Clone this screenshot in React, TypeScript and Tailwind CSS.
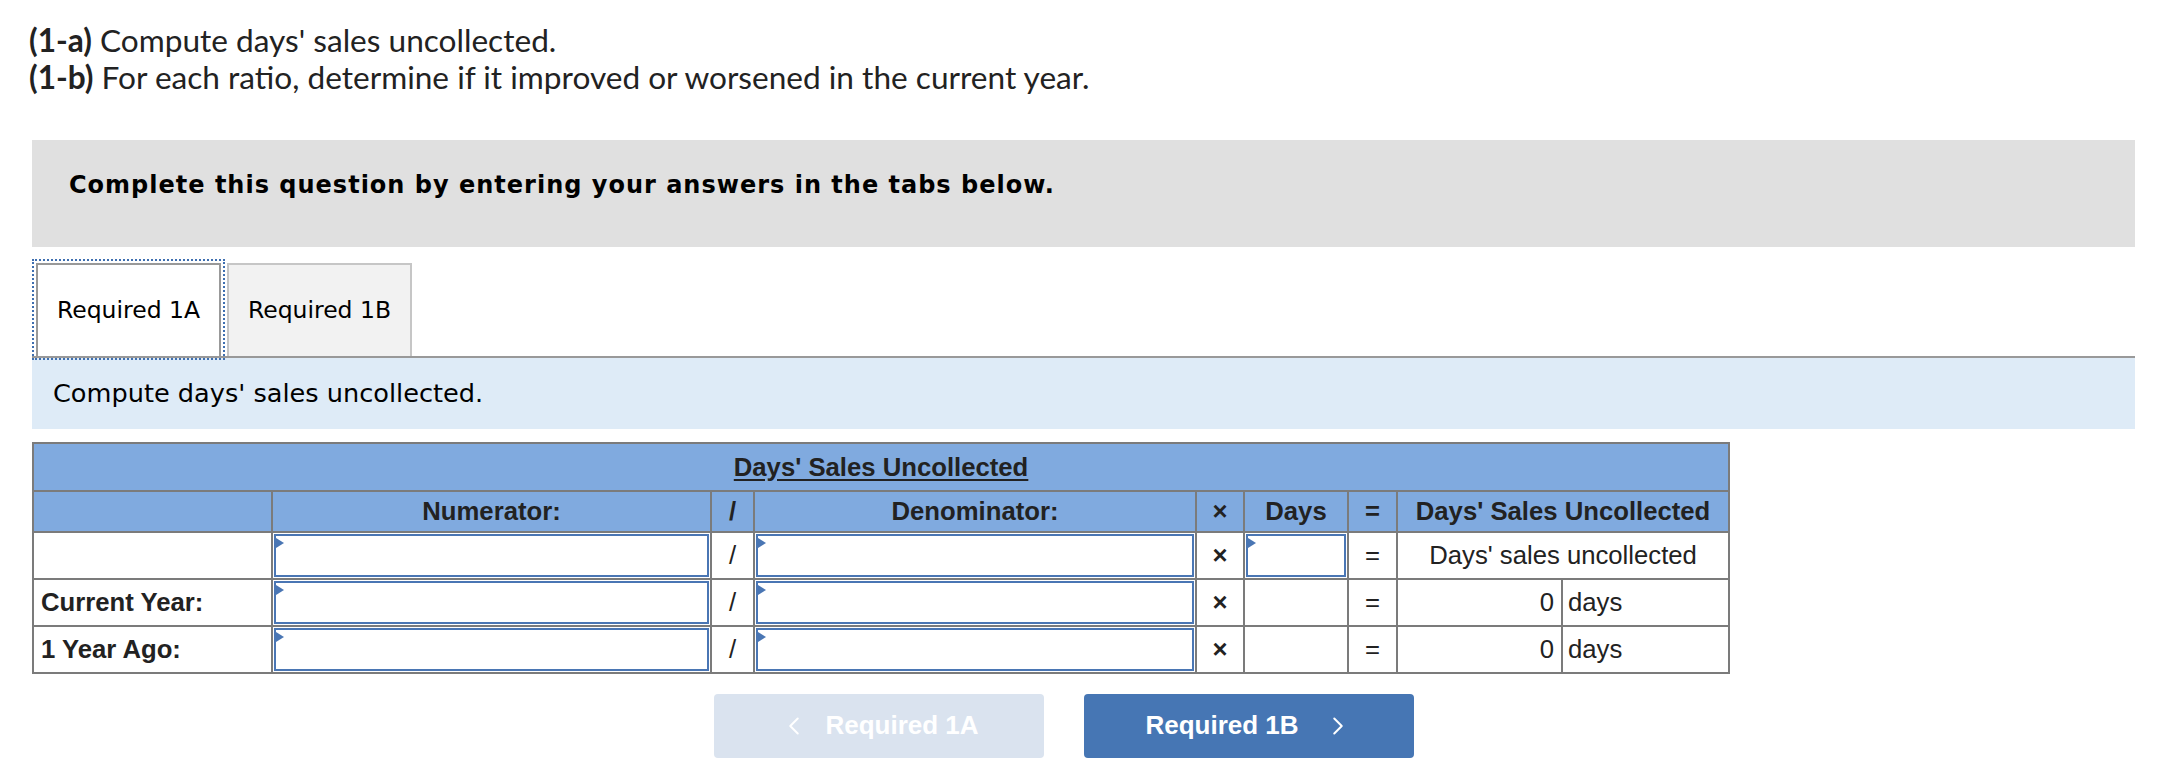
import { ChevronLeft, ChevronRight } from "lucide-react";

const cellBorder = "border-2 border-[#7b7b7b]";

function InputBox() {
    return (
        <div className="relative h-[43px] w-full border-2 border-[#4a76b4] bg-white">
            <span className="absolute left-0 top-[2px] h-0 w-0 border-y-[5px] border-l-[8px] border-y-transparent border-l-[#4a76b4]" />
        </div>
    );
}

function DataRow({ label, first }: { label: string; first?: boolean }) {
    return (
        <tr className="h-[47px]">
            <td className={`${cellBorder} pl-[7px] text-left font-bold`}>{label}</td>
            <td className={`${cellBorder} p-[1px]`}>
                <InputBox />
            </td>
            <td className={`${cellBorder} text-center`}>/</td>
            <td className={`${cellBorder} p-[1px]`}>
                <InputBox />
            </td>
            <td className={`${cellBorder} text-center font-bold`}>×</td>
            <td className={`${cellBorder} p-[1px]`}>{first ? <InputBox /> : null}</td>
            <td className={`${cellBorder} text-center`}>=</td>
            {first ? (
                <td colSpan={2} className={`${cellBorder} text-center`}>
                    Days' sales uncollected
                </td>
            ) : (
                <>
                    <td className={`${cellBorder} pr-[7px] text-right`}>0</td>
                    <td className={`${cellBorder} pl-[5px] text-left`}>days</td>
                </>
            )}
        </tr>
    );
}

export default function App() {
    return (
        <div className="min-h-[772px] w-[2165px] bg-white pb-[14px] pl-[32px] pr-[30px]">
            {/* question text */}
            <div className="-ml-[3px] pt-[22px] font-['Lato',sans-serif] text-[31.6px] leading-[37px] text-[#222]">
                <p>
                    <span className="font-bold">(1-a)</span> Compute days' sales uncollected.
                </p>
                <p>
                    <span className="font-bold">(1-b)</span> For each ratio, determine if it improved or worsened in the
                    current year.
                </p>
            </div>

            <div className="mt-[44px] h-[107px] bg-[#e0e0e0] pl-[37px] pt-[31px] font-['DejaVu_Sans',sans-serif] text-[24px] font-bold leading-[28px] tracking-[1px] text-black">
                Complete this question by entering your answers in the tabs below.
            </div>

            {/* tabs */}
            <div className="mt-[16px] flex items-end border-b-2 border-[#999] font-['DejaVu_Sans',sans-serif] text-[23.5px] text-black">
                <div className="ml-[4px] flex h-[93px] w-[185px] items-center justify-center border-2 border-b-0 border-[#999] bg-white outline-2 outline-offset-2 outline-dotted outline-[#3f6fb0]">
                    Required 1A
                </div>
                <div className="ml-[6px] flex h-[93px] w-[185px] items-center justify-center border-2 border-b-0 border-[#c6c6c6] bg-[#f2f2f2]">
                    Required 1B
                </div>
            </div>

            <div className="flex h-[71px] items-center bg-[#deebf7] pl-[21px] font-['DejaVu_Sans',sans-serif] text-[25.6px] text-black">
                Compute days' sales uncollected.
            </div>

            {/* table */}
            <table className="mt-[13px] w-[1696px] table-fixed border-collapse font-['Liberation_Sans',Arial,sans-serif] text-[25.7px] text-[#222]">
                <colgroup>
                    <col className="w-[239px]" />
                    <col className="w-[439px]" />
                    <col className="w-[43px]" />
                    <col className="w-[442px]" />
                    <col className="w-[48px]" />
                    <col className="w-[104px]" />
                    <col className="w-[49px]" />
                    <col className="w-[165px]" />
                    <col className="w-[167px]" />
                </colgroup>
                <thead className="bg-[#80aadf] font-bold">
                    <tr className="h-[48px]">
                        <th colSpan={9} className={`${cellBorder} text-center`}>
                            <span className="underline underline-offset-[3px]">Days' Sales Uncollected</span>
                        </th>
                    </tr>
                    <tr className="h-[40px]">
                        <th className={cellBorder}></th>
                        <th className={cellBorder}>Numerator:</th>
                        <th className={cellBorder}>/</th>
                        <th className={cellBorder}>Denominator:</th>
                        <th className={cellBorder}>×</th>
                        <th className={cellBorder}>Days</th>
                        <th className={cellBorder}>=</th>
                        <th colSpan={2} className={cellBorder}>
                            Days' Sales Uncollected
                        </th>
                    </tr>
                </thead>
                <tbody>
                    <DataRow label="" first />
                    <DataRow label="Current Year:" />
                    <DataRow label="1 Year Ago:" />
                </tbody>
            </table>

            {/* nav buttons */}
            <div className="mt-[20px] flex gap-[40px] pl-[682px] font-['Liberation_Sans',Arial,sans-serif] text-[26px] font-bold text-white">
                <button
                    type="button"
                    className="flex h-[64px] w-[330px] items-center justify-center gap-[16px] rounded-[4px] bg-[#dae3ef]"
                >
                    <ChevronLeft size={30} strokeWidth={1.6} />
                    <span>Required 1A</span>
                </button>
                <button
                    type="button"
                    className="flex h-[64px] w-[330px] items-center justify-center gap-[24px] rounded-[4px] bg-[#4676b4]"
                >
                    <span>Required 1B</span>
                    <ChevronRight size={30} strokeWidth={1.6} />
                </button>
            </div>
        </div>
    );
}
